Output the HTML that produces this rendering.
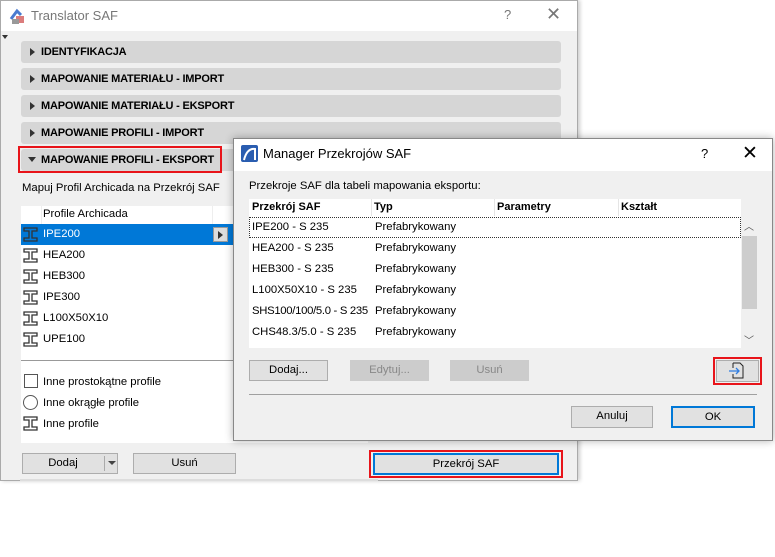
<!DOCTYPE html><html><head><style>
*{margin:0;padding:0;box-sizing:border-box}
body{width:775px;height:481px;background:#fff;position:relative;overflow:hidden;font-family:"Liberation Sans",sans-serif;font-size:11.3px;color:#000}
.a{position:absolute}
.sec{position:absolute;left:21px;width:540px;height:22px;background:#d6d6d6;border-radius:3px;font-weight:bold;font-size:11px;letter-spacing:-0.2px;line-height:22px;padding-left:20px}
.sec.t:before{content:"";position:absolute;left:9px;top:7px;border-left:5px solid #333;border-top:4px solid transparent;border-bottom:4px solid transparent}
.btn{position:absolute;height:21px;background:#e1e1e1;border:1px solid #adadad;text-align:center;line-height:19px;font-size:11.3px}
.row{position:absolute;height:21px;line-height:21px;font-size:11.3px}
</style></head><body>
<div class="a" style="left:0;top:0;width:578px;height:481px;background:#f0f0f0;border:1px solid #aaa;box-shadow:2px 0 4px rgba(0,0,0,.2)"></div>
<div class="a" style="left:1px;top:1px;width:576px;height:30px;background:#fff"></div>
<svg class="a" style="left:9px;top:7px" width="18" height="18"><path d="M2 12 L8 4 L12 8" stroke="#4a7bd0" stroke-width="3" fill="none"/><rect x="7" y="9" width="8" height="7" fill="#c44" opacity=".7"/><rect x="3" y="12" width="7" height="5" fill="#999"/></svg>
<div class="a" style="left:31px;top:8px;font-size:13px;color:#777">Translator SAF</div>
<div class="a" style="left:504px;top:7px;font-size:13px;color:#777">?</div>
<div class="a" style="left:546px;top:4px;font-size:18px;color:#777">✕</div>
<div class="a" style="left:2px;top:35px;border-top:4px solid #333;border-left:3px solid transparent;border-right:3px solid transparent"></div>
<div class="sec t" style="top:41px">IDENTYFIKACJA</div>
<div class="sec t" style="top:68px">MAPOWANIE MATERIAŁU - IMPORT</div>
<div class="sec t" style="top:95px">MAPOWANIE MATERIAŁU - EKSPORT</div>
<div class="sec t" style="top:122px">MAPOWANIE PROFILI - IMPORT</div>
<div class="sec" style="top:149px">MAPOWANIE PROFILI - EKSPORT</div>
<div class="a" style="left:18px;top:146px;width:204px;height:27px;border:2px solid #e8141a"></div>
<div class="a" style="left:28px;top:157px;border-top:5px solid #333;border-left:4px solid transparent;border-right:4px solid transparent"></div>
<div class="a" style="left:22px;top:182px">Mapuj Profil Archicada na Przekrój SAF</div>
<div class="a" style="left:21px;top:206px;width:347px;height:237px;background:#fff"></div>
<div class="a" style="left:41px;top:206px;width:1px;height:18px;background:#eee"></div>
<div class="a" style="left:212px;top:206px;width:1px;height:18px;background:#eee"></div>
<div class="a" style="left:43px;top:208px">Profile Archicada</div>
<div class="a" style="left:21px;top:224px;width:347px;height:21px;background:#0078d7"></div>
<div class="a" style="left:213px;top:227px;width:15px;height:15px;background:#ddd;border:1px solid #999"></div>
<div class="a" style="left:218px;top:231px;border-left:5px solid #333;border-top:4px solid transparent;border-bottom:4px solid transparent"></div>
<div class="row" style="left:43px;top:224px;color:#fff">IPE200</div>
<div class="row" style="left:43px;top:245px">HEA200</div>
<div class="row" style="left:43px;top:266px">HEB300</div>
<div class="row" style="left:43px;top:287px">IPE300</div>
<div class="row" style="left:43px;top:308px">L100X50X10</div>
<div class="row" style="left:43px;top:329px">UPE100</div>
<svg class="a" style="left:23px;top:227px" width="16" height="330">
<g fill="none" stroke="#333" stroke-width="1.3">
<path d="M1 1H14V4H9V11H14V14H1V11H6V4H1Z"/>
<path d="M1 22H14V25H9V32H14V35H1V32H6V25H1Z"/>
<path d="M1 43H14V46H9V53H14V56H1V53H6V46H1Z"/>
<path d="M1 64H14V67H9V74H14V77H1V74H6V67H1Z"/>
<path d="M1 85H14V88H9V95H14V98H1V95H6V88H1Z"/>
<path d="M1 106H14V109H9V116H14V119H1V116H6V109H1Z"/>
<path d="M1 190H14V193H9V200H14V203H1V200H6V193H1Z"/>
</g></svg>
<div class="a" style="left:21px;top:360px;width:347px;height:1px;background:#999"></div>
<div class="a" style="left:24px;top:374px;width:14px;height:14px;border:1px solid #555;background:#fff"></div>
<div class="a" style="left:23px;top:395px;width:15px;height:15px;border:1px solid #555;border-radius:50%;background:#fff"></div>
<div class="a" style="left:43px;top:376px">Inne prostokątne profile</div>
<div class="a" style="left:43px;top:397px">Inne okrągłe profile</div>
<div class="a" style="left:43px;top:418px">Inne profile</div>
<div class="btn" style="left:22px;top:453px;width:96px;padding-right:14px">Dodaj</div>
<div class="a" style="left:104px;top:456px;width:1px;height:15px;background:#aaa"></div>
<div class="a" style="left:108px;top:461px;border-top:4px solid #444;border-left:4px solid transparent;border-right:4px solid transparent"></div>
<div class="btn" style="left:133px;top:453px;width:103px">Usuń</div>
<div class="a" style="left:369px;top:450px;width:194px;height:28px;border:2px solid #e8141a"></div>
<div class="btn" style="left:373px;top:453px;width:186px;height:22px;border:2px solid #0078d7">Przekrój SAF</div>
<div class="a" style="left:20px;top:479px;width:358px;height:2px;background:#ddd"></div>
<div class="a" style="left:233px;top:138px;width:540px;height:303px;background:#f0f0f0;border:1px solid #888;box-shadow:0 0 8px rgba(0,0,0,.3)"></div>
<div class="a" style="left:234px;top:139px;width:538px;height:32px;background:#fff"></div>
<svg class="a" style="left:241px;top:145px" width="17" height="17"><rect width="17" height="17" rx="2" fill="#2a5db0"/><path d="M3 15 Q6 3 14 4 L14 15" stroke="#fff" stroke-width="2" fill="none"/></svg>
<div class="a" style="left:263px;top:146px;font-size:13px">Manager Przekrojów SAF</div>
<div class="a" style="left:701px;top:146px;font-size:13px">?</div>
<div class="a" style="left:742px;top:142px;font-size:19px">✕</div>
<div class="a" style="left:249px;top:180px">Przekroje SAF dla tabeli mapowania eksportu:</div>
<div class="a" style="left:249px;top:199px;width:492px;height:149px;background:#fff"></div>
<div class="a" style="left:371px;top:199px;width:1px;height:17px;background:#e5e5e5"></div>
<div class="a" style="left:494px;top:199px;width:1px;height:17px;background:#e5e5e5"></div>
<div class="a" style="left:618px;top:199px;width:1px;height:17px;background:#e5e5e5"></div>
<div class="a" style="left:252px;top:201px;font-weight:bold;font-size:11px">Przekrój SAF</div>
<div class="a" style="left:374px;top:201px;font-weight:bold;font-size:11px">Typ</div>
<div class="a" style="left:497px;top:201px;font-weight:bold;font-size:11px">Parametry</div>
<div class="a" style="left:621px;top:201px;font-weight:bold;font-size:11px">Kształt</div>
<div class="a" style="left:249px;top:217px;width:492px;height:21px;border:1px dotted #333"></div>
<div class="row" style="left:252px;top:217px">IPE200 - S 235</div>
<div class="row" style="left:252px;top:238px">HEA200 - S 235</div>
<div class="row" style="left:252px;top:259px">HEB300 - S 235</div>
<div class="row" style="left:252px;top:280px">L100X50X10 - S 235</div>
<div class="row" style="left:252px;top:301px;letter-spacing:-0.3px">SHS100/100/5.0 - S 235</div>
<div class="row" style="left:252px;top:322px">CHS48.3/5.0 - S 235</div>
<div class="row" style="left:375px;top:217px">Prefabrykowany</div>
<div class="row" style="left:375px;top:238px">Prefabrykowany</div>
<div class="row" style="left:375px;top:259px">Prefabrykowany</div>
<div class="row" style="left:375px;top:280px">Prefabrykowany</div>
<div class="row" style="left:375px;top:301px">Prefabrykowany</div>
<div class="row" style="left:375px;top:322px">Prefabrykowany</div>
<div class="a" style="left:742px;top:236px;width:15px;height:73px;background:#cdcdcd"></div>
<div class="a" style="left:744px;top:218px;font-size:10px;color:#555">︿</div>
<div class="a" style="left:744px;top:332px;font-size:10px;color:#555">﹀</div>
<div class="btn" style="left:249px;top:360px;width:79px">Dodaj...</div>
<div class="btn" style="left:350px;top:360px;width:79px;background:#ccc;border-color:#ccc;color:#888">Edytuj...</div>
<div class="btn" style="left:450px;top:360px;width:79px;background:#ccc;border-color:#ccc;color:#888">Usuń</div>
<div class="a" style="left:713px;top:357px;width:49px;height:28px;border:2px solid #e8141a"></div>
<div class="btn" style="left:716px;top:360px;width:43px;height:22px"></div>
<svg class="a" style="left:729px;top:362px" width="18" height="18"><path d="M4 1H11L14 4V16H4V12M4 6V1" fill="none" stroke="#222"/><path d="M0 9H10M7 6L10 9L7 12" fill="none" stroke="#2f7de1" stroke-width="1.3"/></svg>
<div class="a" style="left:249px;top:394px;width:508px;height:1px;background:#a0a0a0"></div>
<div class="btn" style="left:571px;top:406px;width:82px;height:22px">Anuluj</div>
<div class="btn" style="left:671px;top:406px;width:84px;height:22px;border:2px solid #0078d7">OK</div>
</body></html>
